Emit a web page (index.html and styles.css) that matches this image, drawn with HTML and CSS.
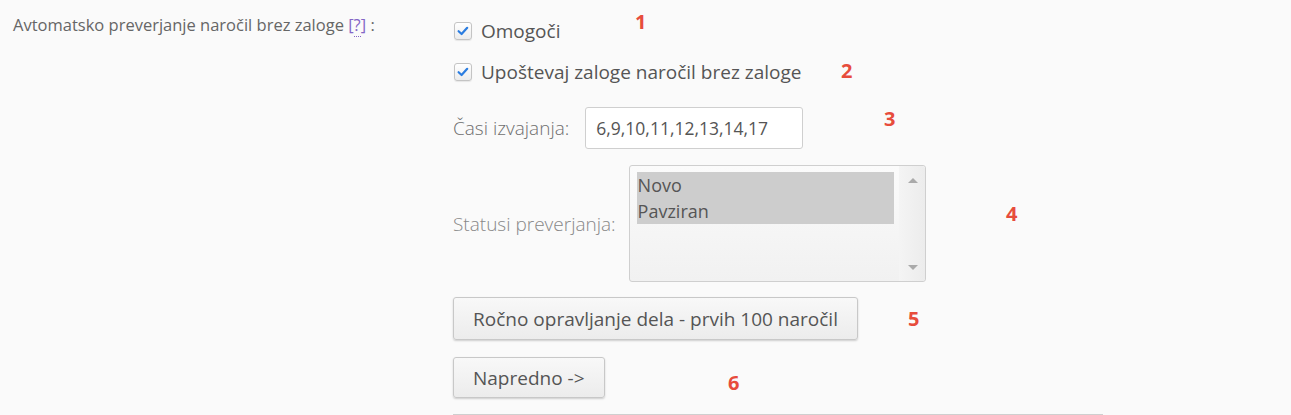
FILE: index.html
```html
<!DOCTYPE html>
<html lang="sl">
<head>
<meta charset="utf-8">
<title>Nastavitve</title>
<link rel="stylesheet" href="styles.css">
</head>
<body>
<div class="page">
  <div class="row">
    <div class="label">Avtomatsko preverjanje naročil brez zaloge <a class="help" href="#">[<span class="q">?</span>]</a> :</div>
    <div class="controls">
      <label class="check">
        <span class="box"><svg viewBox="0 0 18 18" width="18" height="18"><path d="M4.6 9.2 L7.6 12 L13.2 5.8" fill="none" stroke="#2b7de0" stroke-width="2.2" stroke-linecap="round" stroke-linejoin="round"/></svg></span>
        <span class="check-text">Omogoči</span>
      </label>
      <label class="check">
        <span class="box"><svg viewBox="0 0 18 18" width="18" height="18"><path d="M4.6 9.2 L7.6 12 L13.2 5.8" fill="none" stroke="#2b7de0" stroke-width="2.2" stroke-linecap="round" stroke-linejoin="round"/></svg></span>
        <span class="check-text">Upoštevaj zaloge naročil brez zaloge</span>
      </label>
      <div class="field field-times">
        <span class="field-label">Časi izvajanja:</span>
        <span class="input">6,9,10,11,12,13,14,17</span>
      </div>
      <div class="field field-status">
        <span class="field-label">Statusi preverjanja:</span>
        <div class="listbox">
          <div class="options">
            <div class="option selected">Novo</div>
            <div class="option selected">Pavziran</div>
          </div>
          <div class="scrollbar">
            <span class="arrow up"></span>
            <span class="arrow down"></span>
          </div>
        </div>
      </div>
      <button class="btn btn-manual">Ročno opravljanje dela - prvih 100 naročil</button>
      <button class="btn btn-adv">Napredno -&gt;</button>
      <div class="rule"></div>
    </div>
  </div>
  <span class="num n1">1</span>
  <span class="num n2">2</span>
  <span class="num n3">3</span>
  <span class="num n4">4</span>
  <span class="num n5">5</span>
  <span class="num n6">6</span>
</div>
</body>
</html>
```
FILE: styles.css
```css
html, body {
  margin: 0;
  padding: 0;
  background: #fafafa;
  font-family: "Open Sans", "Liberation Sans", sans-serif;
  color: #555;
}
.page {
  position: relative;
  width: 1291px;
  height: 415px;
  overflow: hidden;
}
.row {
  display: flex;
}
.label {
  width: 453px;
  flex: none;
  box-sizing: border-box;
  padding: 15px 0 0 13px;
  font-size: 16.5px;
  line-height: 24px;
  color: #666;
  margin-top: -2px;
}
.help {
  color: #8466c6;
  text-decoration: none;
}
.help .q {
  border-bottom: 1px dotted #8466c6;
}
.controls {
  display: flex;
  flex-direction: column;
  align-items: flex-start;
  padding-top: 22px;
}
.check {
  display: flex;
  align-items: center;
  gap: 9px;
  height: 18px;
  margin-left: 1px;
  font-size: 19px;
  color: #555;
}
.check + .check {
  margin-top: 23px;
}
.box {
  width: 16px;
  height: 16px;
  border: 1px solid #c4c4c4;
  border-radius: 3px;
  background: linear-gradient(#ffffff, #ececec);
  box-shadow: 0 1px 1px rgba(0,0,0,0.08);
  display: flex;
  align-items: center;
  justify-content: center;
  overflow: hidden;
}
.box svg {
  flex: none;
}
.field {
  display: flex;
  align-items: center;
}
.field-times {
  margin-top: 26px;
  gap: 16px;
}
.field-status {
  margin-top: 16px;
  gap: 13px;
}
.field-label {
  font-size: 19px;
  font-weight: 300;
  color: #6f6f6f;
}
.field-status .field-label {
  color: #888;
}
.input {
  width: 216px;
  height: 40px;
  box-sizing: content-box;
  border: 1px solid #cfcfcf;
  border-radius: 3px;
  background: #fff;
  font-size: 17.5px;
  line-height: 40px;
  padding: 0;
  text-indent: 10px;
  color: #555;
}
.listbox {
  width: 295px;
  height: 115px;
  border: 1px solid #cfcfcf;
  border-radius: 3px;
  background: linear-gradient(#fbfbfb, #f1f1f1);
  display: flex;
}
.options {
  flex: 1;
  padding: 6px 5px 0 7px;
}
.option {
  height: 26px;
  line-height: 26px;
  font-size: 18px;
  color: #555;
  padding-left: 1px;
}
.option.selected {
  background: #cdcdcd;
}
.scrollbar {
  width: 26px;
  background: linear-gradient(90deg, #f4f4f4, #ececec);
  position: relative;
  border-radius: 0 3px 3px 0;
}
.arrow {
  position: absolute;
  left: 9px;
  width: 0;
  height: 0;
  border-left: 5px solid transparent;
  border-right: 5px solid transparent;
}
.arrow.up {
  top: 12px;
  border-bottom: 5px solid #aaa;
}
.arrow.down {
  bottom: 11px;
  border-top: 5px solid #aaa;
}
.btn {
  font-family: "Open Sans", "Liberation Sans", sans-serif;
  font-size: 19px;
  color: #555;
  background: linear-gradient(#f8f8f8, #ececec);
  border: 1px solid #c8c8c8;
  border-radius: 3px;
  box-shadow: 0 1px 2px rgba(0,0,0,0.18);
  padding: 0 19px;
  cursor: pointer;
  white-space: nowrap;
}
.btn-manual {
  margin-top: 15px;
  width: 405px;
  height: 43px;
  padding: 0;
}
.btn-adv {
  margin-top: 17px;
  width: 152px;
  height: 41px;
  padding: 0 0 0 19px;
  text-align: left;
}
.rule {
  margin-top: 16px;
  width: 650px;
  height: 0;
  border-top: 2px solid #cfcfcf;
}
.num {
  position: absolute;
  font-size: 20px;
  line-height: 20px;
  font-weight: 700;
  color: #e74c3c;
}
.n1 { left: 635px; top: 12px; }
.n2 { left: 841px; top: 61px; }
.n3 { left: 884px; top: 109px; }
.n4 { left: 1006px; top: 204px; }
.n5 { left: 908px; top: 309px; }
.n6 { left: 728px; top: 373px; }
```
